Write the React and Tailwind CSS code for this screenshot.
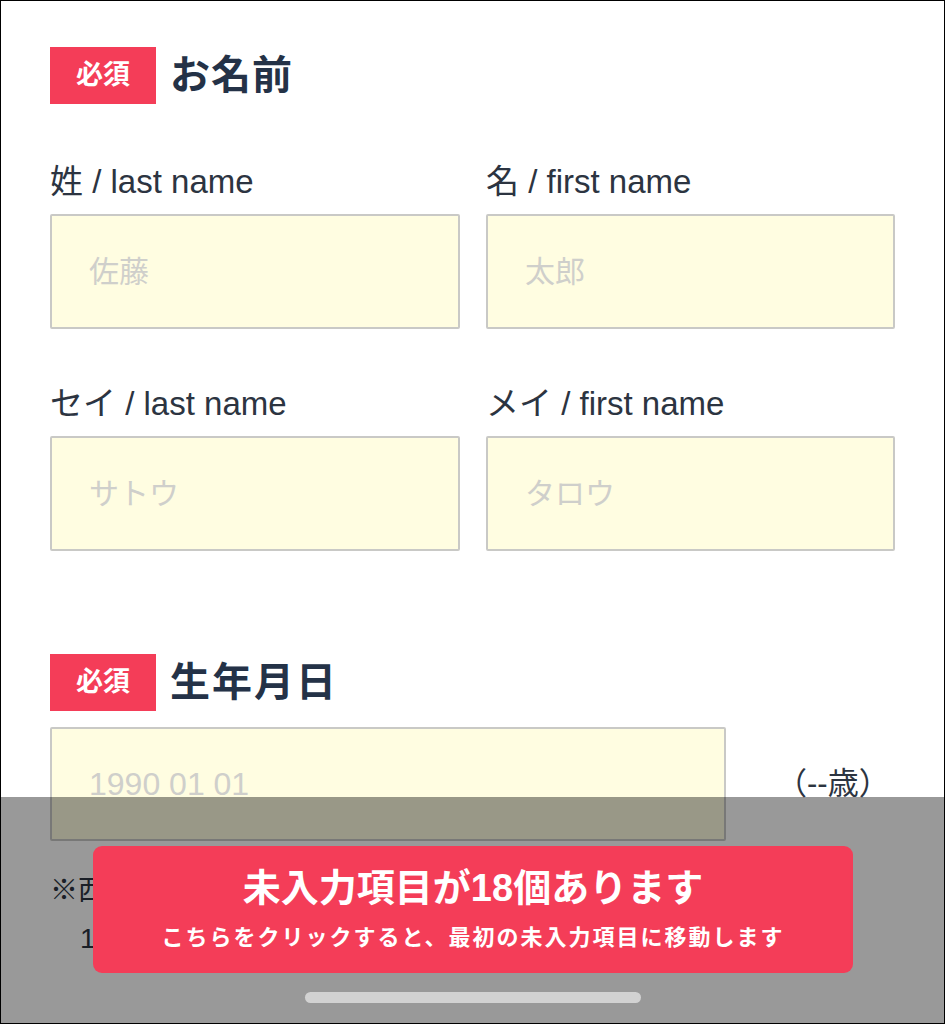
export default function App() {
  const font = "font-['Liberation_Sans','Noto_Sans_CJK_JP',sans-serif]";

  const Badge = () => (
    <div className="w-[106px] h-[57px] bg-[#f43d58] flex items-center justify-center text-white text-[27px] font-bold">
      必須
    </div>
  );

  const Field = ({ label, placeholder }) => (
    <div className="flex flex-col">
      <div className="text-[33px] leading-[40px] text-[#2c3441]">{label}</div>
      <div className="mt-[12px] h-[115px] border-2 border-[#c9c9c6] rounded-[2px] bg-[#fffde1] flex items-center pl-[37px] text-[30px] text-[#cfcfcb]">
        {placeholder}
      </div>
    </div>
  );

  return (
    <div className={`${font} relative w-[945px] h-[1024px] overflow-hidden bg-white border border-black`}>
      <div className="pt-[44px] pl-[49px] pr-[49px]">
        <div className="flex items-center">
          <Badge />
          <h1 className="ml-[14px] text-[40px] font-bold text-[#243247] tracking-[1px]">お名前</h1>
        </div>

        <div className="mt-[57px] grid grid-cols-[410px_409px] gap-x-[26px]">
          <Field label="姓 / last name" placeholder="佐藤" />
          <Field label="名 / first name" placeholder="太郎" />
        </div>
        <div className="mt-[55px] grid grid-cols-[410px_409px] gap-x-[26px]">
          <Field label="セイ / last name" placeholder="サトウ" />
          <Field label="メイ / first name" placeholder="タロウ" />
        </div>

        <div className="mt-[101px] flex items-center">
          <Badge />
          <h2 className="ml-[14px] text-[40px] font-bold text-[#243247] tracking-[2px]">生年月日</h2>
        </div>

        <div className="mt-[15px] flex items-center">
          <div className="w-[676px] h-[114px] border-2 border-[#c9c9c6] rounded-[2px] bg-[#fffde1] flex items-center pl-[37px] text-[32px] text-[#cfcfcb]">
            1990 01 01
          </div>
          <div className="ml-[50px] text-[31px] text-[#2c3441]">（--歳）</div>
        </div>

        <div className="mt-[26px] text-[28px] leading-[48px] text-[#2c3441]">
          <div>※西暦で入力してください</div>
          <div className="pl-[30px]">1990年1月1日の場合は「19900101」</div>
        </div>
      </div>

      <div className="absolute left-0 right-0 top-[796px] bottom-0 bg-black/40" />

      <div className="absolute left-[92px] top-[845px] w-[760px] h-[127px] rounded-[9px] bg-[#f43d58] flex flex-col items-center pt-[19px] text-white">
        <div className="text-[38px] leading-[46px] font-bold">未入力項目が18個あります</div>
        <div className="mt-[12px] text-[22px] leading-[30px] font-bold tracking-[2px]">
          こちらをクリックすると、最初の未入力項目に移動します
        </div>
      </div>

      <div className="absolute left-[304px] top-[991px] w-[336px] h-[11px] rounded-full bg-[#d2d2d2]" />
    </div>
  );
}
